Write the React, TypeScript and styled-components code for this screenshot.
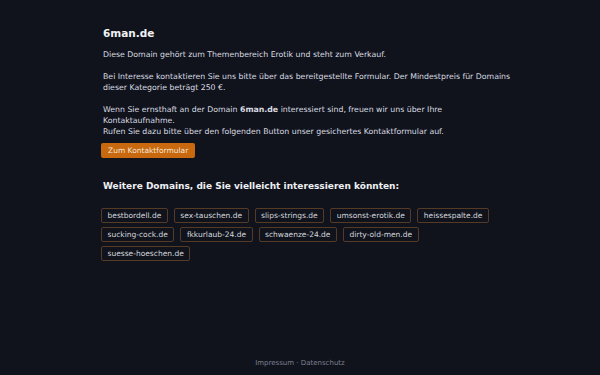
import React from "react";
import styled, { createGlobalStyle } from "styled-components";

const Global = createGlobalStyle`
  html, body { margin: 0; padding: 0; background: #10131c; }
  body { font-family: "DejaVu Sans", Verdana, sans-serif; color: #d9dbe0; }
`;

const Page = styled.div`
  min-height: 375px;
  display: flex;
  flex-direction: column;
  box-sizing: border-box;
`;

const Main = styled.main`
  padding: 26px 88px 0 103px;
  flex: 1;
  font-size: 7.8px;
  line-height: 11px;
`;

const Title = styled.h1`
  margin: 0 0 9px;
  font-size: 10.5px;
  line-height: 14px;
  font-weight: bold;
  color: #f0f1f4;
`;

const P = styled.p`
  margin: 0 0 11px;
`;

const Button = styled.button`
  display: block;
  font-family: inherit;
  font-size: 7.5px;
  background: #c8680f;
  color: #f6e7d6;
  border: none;
  border-radius: 2px;
  padding: 0 7px;
  height: 15px;
  margin: -5px 0 0 -2px;
`;

const H2 = styled.h2`
  margin: 22px 0 16px;
  font-size: 9px;
  line-height: 12px;
  font-weight: bold;
  color: #eef0f3;
`;

const Tags = styled.div`
  display: flex;
  flex-wrap: wrap;
  gap: 4px 6px;
  margin-left: -2px;
`;

const Tag = styled.a`
  display: inline-flex;
  align-items: center;
  height: 15px;
  padding: 0 5.5px;
  box-sizing: border-box;
  border: 1px solid #553a26;
  border-radius: 2px;
  font-size: 7.5px;
  color: #d5d7dc;
  text-decoration: none;
`;

const Footer = styled.footer`
  text-align: center;
  font-size: 7px;
  color: #7c8090;
  padding-bottom: 8px;
`;

const domains = [
  "bestbordell.de",
  "sex-tauschen.de",
  "slips-strings.de",
  "umsonst-erotik.de",
  "heissespalte.de",
  "sucking-cock.de",
  "fkkurlaub-24.de",
  "schwaenze-24.de",
  "dirty-old-men.de",
  "suesse-hoeschen.de",
];

export default function App() {
  return (
    <Page>
      <Global />
      <Main>
        <Title>6man.de</Title>
        <P>Diese Domain gehört zum Themenbereich Erotik und steht zum Verkauf.</P>
        <P>
          Bei Interesse kontaktieren Sie uns bitte über das bereitgestellte Formular. Der Mindestpreis für Domains
          dieser Kategorie beträgt 250 €.
        </P>
        <P>
          Wenn Sie ernsthaft an der Domain <b>6man.de</b> interessiert sind, freuen wir uns über Ihre Kontaktaufnahme.
          <br />
          Rufen Sie dazu bitte über den folgenden Button unser gesichertes Kontaktformular auf.
        </P>
        <Button>Zum Kontaktformular</Button>
        <H2>Weitere Domains, die Sie vielleicht interessieren könnten:</H2>
        <Tags>
          {domains.map((d) => (
            <Tag key={d} href="#">{d}</Tag>
          ))}
        </Tags>
      </Main>
      <Footer>Impressum · Datenschutz</Footer>
    </Page>
  );
}
